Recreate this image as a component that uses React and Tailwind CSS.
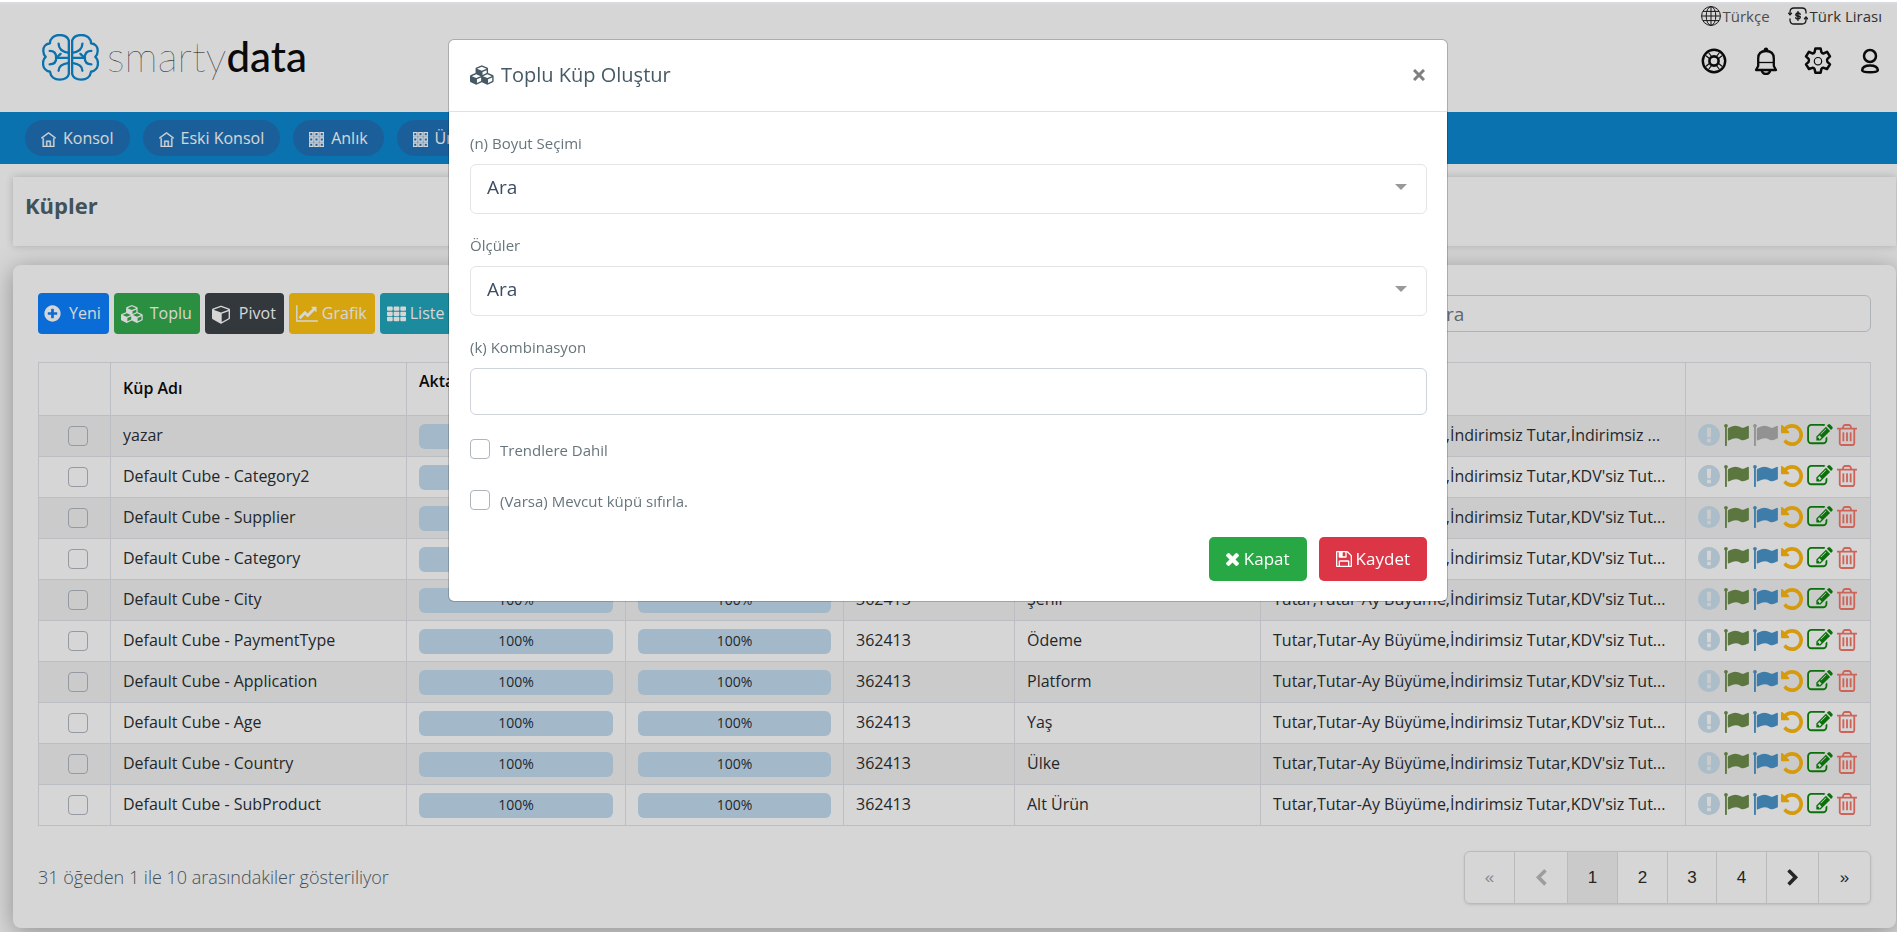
import React, { useState } from 'react';
import { TfiHome, TfiLayoutGrid3 } from 'react-icons/tfi';

const PATHS = {
  plus: ['0 0 1792 1792', 'M1344 960v-128q0-26-19-45t-45-19h-256v-256q0-26-19-45t-45-19h-128q-26 0-45 19t-19 45v256h-256q-26 0-45 19t-19 45v128q0 26 19 45t45 19h256v256q0 26 19 45t45 19h128q26 0 45-19t19-45v-256h256q26 0 45-19t19-45zm320-64q0 209-103 385.5t-279.5 279.5-385.5 103-385.5-103-279.5-279.5-103-385.5 103-385.5 279.5-279.5 385.5-103 385.5 103 279.5 279.5 103 385.5z'],
  cubes: ['0 0 2304 1792', 'M640 1632l384-192v-314l-384 164v342zm-64-454l404-173-404-173-404 173zm1088 454l384-192v-314l-384 164v342zm-64-454l404-173-404-173-404 173zm-448-293l384-165v-266l-384 164v267zm-64-379l441-189-441-189-441 189zm1088 518v416q0 36-19 67t-52 47l-448 224q-25 14-57 14t-57-14l-448-224q-4-2-7-4-2 2-7 4l-448 224q-25 14-57 14t-57-14l-448-224q-33-16-52-47t-19-67v-416q0-38 21.5-70t56.5-48l434-186v-400q0-38 21.5-70t56.5-48l448-192q23-10 50-10t50 10l448 192q35 16 56.5 48t21.5 70v400l434 186q36 16 57 48t21 70z'],
  cube: ['0 0 1664 1792', 'M896 1629l640-349v-636l-640 233v752zm-64-865l698-254-698-254-698 254zm832-252v768q0 35-18 65t-49 47l-704 384q-28 16-61 16t-61-16l-704-384q-31-17-49-47t-18-65v-768q0-40 23-73t61-47l704-256q22-8 44-8t44 8l704 256q38 14 61 47t23 73z'],
  chart: ['0 0 2048 1792', 'M2048 1536v128h-2048v-1536h128v1408h1920zm-128-1248v435q0 21-19.5 29.5t-35.5-7.5l-121-121-633 633q-10 10-23 10t-23-10l-233-233-416 416-192-192 585-585q10-10 23-10t23 10l233 233 464-464-121-121q-16-16-7.5-35.5t29.5-19.5h435q14 0 23 9t9 23z'],
  th: ['0 0 20 16', 'M1 0h4q1 0 1 1v2.500q0 1-1 1h-4q-1 0-1-1v-2.500q0-1 1-1zM8 0h4q1 0 1 1v2.500q0 1-1 1h-4q-1 0-1-1v-2.500q0-1 1-1zM15 0h4q1 0 1 1v2.500q0 1-1 1h-4q-1 0-1-1v-2.500q0-1 1-1zM1 5.500h4q1 0 1 1v2.500q0 1-1 1h-4q-1 0-1-1v-2.500q0-1 1-1zM8 5.500h4q1 0 1 1v2.500q0 1-1 1h-4q-1 0-1-1v-2.500q0-1 1-1zM15 5.500h4q1 0 1 1v2.500q0 1-1 1h-4q-1 0-1-1v-2.500q0-1 1-1zM1 11h4q1 0 1 1v2.500q0 1-1 1h-4q-1 0-1-1v-2.500q0-1 1-1zM8 11h4q1 0 1 1v2.500q0 1-1 1h-4q-1 0-1-1v-2.500q0-1 1-1zM15 11h4q1 0 1 1v2.500q0 1-1 1h-4q-1 0-1-1v-2.500q0-1 1-1z'],
  info: ['128 128 1536 1536', 'M896 128q209 0 385.5 103t279.5 279.5 103 385.5-103 385.5-279.5 279.5-385.5 103-385.5-103-279.5-279.5-103-385.5 103-385.5 279.5-279.5 385.5-103zm128 1247v-190q0-14-9-23.5t-22-9.5h-192q-13 0-23 10t-10 23v190q0 13 10 23t23 10h192q13 0 22-9.5t9-23.5zm-2-344l18-621q0-12-10-18-10-8-24-8h-220q-14 0-24 8-10 6-10 18l17 621q0 10 10 17.5t24 7.5h185q14 0 23.5-7.5t10.5-17.5z'],
  flag: ['64 128 1728 1536', 'M320 256q0 72-64 110v1266q0 13-9.5 22.5t-22.5 9.5h-64q-13 0-22.5-9.5t-9.5-22.5v-1266q-64-38-64-110 0-53 37.5-90.5t90.5-37.5 90.5 37.5 37.5 90.5zm1472 64v763q0 25-12.5 38.5t-39.5 27.5q-215 116-369 116-61 0-123.5-22t-108.500-48-115.500-48-142.500-22q-192 0-464 146-17 9-33 9-26 0-45-19t-19-45v-742q0-32 31-55 21-14 79-43 236-120 421-120 107 0 200 29t219 88q38 19 88 19 54 0 117.500-21t110-47 88-47 54.500-21q26 0 45 19t19 45z'],
  undo: ['128 128 1536 1536', 'M1664 896q0 156-61 298t-164 245-245 164-298 61q-172 0-327-72.5t-264-204.5q-7-10-6.5-22.5t8.500-20.5l137-138q10-9 25-9 16 2 23 12 73 95 179 147t225 52q104 0 198.5-40.5t163.5-109.5 109.5-163.5 40.5-198.5-40.5-198.5-109.5-163.5-163.5-109.5-198.5-40.5q-98 0-188 35.5t-160 101.5l137 138q31 30 14 69-17 40-59 40h-448q-26 0-45-19t-19-45v-448q0-42 40-59 39-17 69 14l130 129q107-101 244.5-156.5t284.5-55.5q156 0 298 61t245 164 164 245 61 298z'],
  edit: ['0 128 1792 1536', 'M888 1184l116-116-152-152-116 116v56h96v96h56zm440-720q-16-16-33 1l-350 350q-17 17-1 33t33-1l350-350q17-17 1-33zm80 594v190q0 119-84.5 203.5t-203.5 84.5h-832q-119 0-203.5-84.5t-84.5-203.5v-832q0-119 84.5-203.5t203.5-84.5h832q63 0 117 25 15 7 18 23 3 17-9 29l-49 49q-14 14-32 8-23-6-45-6h-832q-66 0-113 47t-47 113v832q0 66 47 113t113 47h832q66 0 113-47t47-113v-126q0-13 9-22l64-64q15-15 35-7t20 29zm-96-738l288 288-672 672h-288v-288zm444 132l-92 92-288-288 92-92q28-28 68-28t68 28l152 152q28 28 28 68t-28 68z'],
  trash: ['192 128 1408 1536', 'M704 736v576q0 14-9 23t-23 9h-64q-14 0-23-9t-9-23v-576q0-14 9-23t23-9h64q14 0 23 9t9 23zm256 0v576q0 14-9 23t-23 9h-64q-14 0-23-9t-9-23v-576q0-14 9-23t23-9h64q14 0 23 9t9 23zm256 0v576q0 14-9 23t-23 9h-64q-14 0-23-9t-9-23v-576q0-14 9-23t23-9h64q14 0 23 9t9 23zm128 724v-948h-896v948q0 22 7 40.5t14.5 27 10.5 8.5h832q3 0 10.5-8.5t14.5-27 7-40.5zm-672-1076h448l-48-117q-7-9-17-11h-317q-10 2-17 11zm928 32v64q0 14-9 23t-23 9h-96v948q0 83-47 143.5t-113 60.5h-832q-66 0-113-58.5t-47-141.5v-952h-96q-14 0-23-9t-9-23v-64q0-14 9-23t23-9h309l70-167q15-37 54-63t79-26h320q40 0 79 26t54 63l70 167h309q14 0 23 9t9 23z'],
  save: ['128 128 1536 1536', 'M512 1536h768v-384h-768v384zm896 0h128v-896q0-14-10-38.5t-20-34.5l-281-281q-10-10-34-20t-39-10v416q0 40-28 68t-68 28h-576q-40 0-68-28t-28-68v-416h-128v1280h128v-416q0-40 28-68t68-28h832q40 0 68 28t28 68v416zm-384-928v-320q0-13-9.5-22.5t-22.5-9.5h-192q-13 0-22.5 9.5t-9.5 22.5v320q0 13 9.5 22.5t22.5 9.5h192q13 0 22.5-9.5t9.5-22.5zm640 32v928q0 40-28 68t-68 28h-1344q-40 0-68-28t-28-68v-1344q0-40 28-68t68-28h928q40 0 88 20t76 48l280 280q28 28 48 76t20 88z'],
  times: ['302 366 1188 1188', 'M1490 1322q0 40-28 68l-136 136q-28 28-68 28t-68-28l-294-294-294 294q-28 28-68 28t-68-28l-136-136q-28-28-28-68t28-68l294-294-294-294q-28-28-28-68t28-68l136-136q28-28 68-28t68 28l294 294 294-294q28-28 68-28t68 28l136 136q28 28 28 68t-28 68l-294 294 294 294q28 28 28 68z'],
  right: ['0 0 1792 1792', 'M1363 877l-742 742q-19 19-45 19t-45-19l-166-166q-19-19-19-45t19-45l531-531-531-531q-19-19-19-45t19-45l166-166q19-19 45-19t45 19l742 742q19 19 19 45t-19 45z'],
  left: ['0 0 1792 1792', 'M1427 301l-531 531 531 531q19 19 19 45t-19 45l-166 166q-19 19-45 19t-45-19l-742-742q-19-19-19-45t19-45l742-742q19-19 45-19t45 19l166 166q19 19 19 45t-19 45z'],
};

const Icon = ({ name, className }) => (
  <svg viewBox={PATHS[name][0]} className={className} fill="currentColor" aria-hidden="true">
    <path d={PATHS[name][1]} />
  </svg>
);

const BrainHalf = () => (
  <>
    <path d="M81 20C78 8 66 3 52 3C36 3 24 14 24 28C10 30 3 40 4 52C4 60 7 65 11 69C5 74 3 80 3 88C3 102 12 112 24 114C26 129 38 138 53 138C67 138 78 133 81 121Z" />
    <path d="M81 57C66 55 50 48 50 29" />
    <path d="M81 72H42" />
    <path d="M23 51C36 51 43 57 43 72C43 85 36 92 23 92" />
    <path d="M43 72L56 60" />
    <path d="M81 87C66 89 50 96 50 111" />
  </>
);

const Logo = () => (
  <a href="#" className="flex items-center gap-2 text-black">
    <svg viewBox="0 0 172 142" className="h-[47px] w-[57px]" fill="none" stroke="#0082cd" strokeWidth="7" strokeLinecap="round" strokeLinejoin="round">
      <BrainHalf />
      <g transform="matrix(-1 0 0 1 172 0)">
        <BrainHalf />
      </g>
    </svg>
    <span className="pb-0.5 font-['Lato',sans-serif] text-[42px] leading-[46px]">
      <span className="font-thin">smarty</span>
      <span className="font-medium">data</span>
    </span>
  </a>
);

const GlobeIcon = () => (
  <svg viewBox="0 0 20 20" className="size-5" fill="none" stroke="#111" strokeWidth="1">
    <circle cx="10" cy="10" r="9.400" />
    <ellipse cx="10" cy="10" rx="4.800" ry="9.400" />
    <path d="M10 .6v18.800M.6 10h18.800M2 5.400h16M2 14.600h16" />
  </svg>
);

const CurrencyIcon = () => (
  <svg viewBox="0 0 20 20" className="size-5" fill="none" stroke="#111" strokeWidth="1.300" strokeLinecap="round" strokeLinejoin="round">
    <path d="M2 8.500V6Q2 2 6 2h8q4 0 4 4v1M18 11.500V14q0 4-4 4H6q-4 0-4-4v-1" />
    <path d="M.6 7.200L2 8.900l1.500-1.700M16.500 12.700L18 11l1.500 1.700" />
    <path d="M12.200 8.200Q11.800 7 10 7T7.900 8.500 10 10t2.200 1.500T10 13t-2.200-1.200M10 5.800v8.400" strokeWidth="1.500" />
  </svg>
);

const HelpIcon = () => (
  <svg viewBox="0 0 26 26" className="size-[26px] shrink-0" fill="none" stroke="currentColor">
    <circle cx="13" cy="13" r="11.200" strokeWidth="2.400" />
    <circle cx="13" cy="13" r="4.600" strokeWidth="2.600" />
    <path strokeWidth="1.200" d="M9 11L5 7.800M11 9L7.800 5M15 9l3.200-4M17 11l4-3.200M17 15l4 3.200M15 17l3.200 4M11 17l-3.200 4M9 15l-4 3.200" />
  </svg>
);

const BellIcon = () => (
  <svg viewBox="0 0 24 28" className="h-7 w-6 shrink-0" fill="none" stroke="currentColor" strokeWidth="2.300" strokeLinejoin="round">
    <path d="M2 23l2.200-4V11.500Q4.200 4 12 4t7.800 7.500V19L22 23z" />
    <path d="M4.200 15.500h15.600" strokeWidth="1.300" />
    <path d="M9.500 3.500Q9.700.6 12 .6t2.500 2.900z" fill="currentColor" stroke="none" />
    <path d="M7.800 23.500Q8.500 27 12 27t4.200-3.500" />
  </svg>
);

const GearIcon = () => (
  <svg viewBox="0 0 28 28" className="size-7 shrink-0" fill="none" stroke="currentColor" strokeLinejoin="round">
    <path
      strokeWidth="2.500"
      d="M11.400 1.500h5.200l.8 3.600q.8 1.500 2.300 1.300l3.300-1.600 3 4.600-2.600 2.500q-1 1.400 0 3l2.600 2.400-3 4.700-3.300-1.200q-1.600-.3-2.300 1.200l-.8 3.800h-5.200l-.8-3.800q-.8-1.500-2.300-1.200L5 22l-3-4.700 2.600-2.400q1-1.600 0-3L2 9.400l3-4.600 3.300 1.600q1.600.2 2.300-1.300z"
    />
    <circle cx="14" cy="14.200" r="3.700" strokeWidth="1.200" />
  </svg>
);

const UserIcon = () => (
  <svg viewBox="0 0 20 28" className="h-7 w-5 shrink-0" fill="none" stroke="currentColor" strokeWidth="2.500">
    <circle cx="10" cy="9" r="6" />
    <path d="M2.200 23.200Q2.500 18.400 10 18.400t7.800 4.800Q17.500 25.200 10 25.200T2.200 23.200z" />
  </svg>
);

const navItems = [
  { label: 'Konsol', icon: TfiHome },
  { label: 'Eski Konsol', icon: TfiHome },
  { label: 'Anlık', icon: TfiLayoutGrid3 },
  { label: 'Ürün', icon: TfiLayoutGrid3 },
];

const tools = [
  { label: 'Yeni', icon: 'plus', box: 'size-[19px]', style: 'bg-[#007bff] gap-[7px] pl-[5px]' },
  { label: 'Toplu', icon: 'cubes', box: 'h-[18px] w-[23px]', style: 'bg-[#28a745] gap-1.5 pl-[7px]' },
  { label: 'Pivot', icon: 'cube', box: 'h-5 w-[18px]', style: 'bg-[#343a40] gap-[9px] pl-[7px]' },
  { label: 'Grafik', icon: 'chart', box: 'h-[19px] w-[22px]', style: 'bg-[#ffc107] gap-1 pl-[7px]' },
  { label: 'Liste', icon: 'th', box: 'h-4 w-[19px]', style: 'bg-[#17a2b8] gap-1 pl-[7px]' },
];

const measures = "Tutar,Tutar-Ay Büyüme,İndirimsiz Tutar,KDV'siz Tut...";

const rows = [
  { name: 'yazar', dimension: 'Yazar', measures: 'Tutar,Tutar-Ay Büyüme,İndirimsiz Tutar,İndirimsiz ...', off: true },
  { name: 'Default Cube - Category2', dimension: 'Kategori 2', measures },
  { name: 'Default Cube - Supplier', dimension: 'Tedarikçi', measures },
  { name: 'Default Cube - Category', dimension: 'Kategori', measures },
  { name: 'Default Cube - City', dimension: 'Şehir', measures },
  { name: 'Default Cube - PaymentType', dimension: 'Ödeme', measures },
  { name: 'Default Cube - Application', dimension: 'Platform', measures },
  { name: 'Default Cube - Age', dimension: 'Yaş', measures },
  { name: 'Default Cube - Country', dimension: 'Ülke', measures },
  { name: 'Default Cube - SubProduct', dimension: 'Alt Ürün', measures },
];

const checkboxClass = 'size-5 shrink-0 appearance-none rounded border border-[#adb5bd] bg-transparent checked:bg-[#007bff]';

const Progress = () => (
  <div className="h-[25px] rounded-md bg-[#c0dbf1] text-center text-sm leading-[23px] text-[#212529]">100%</div>
);

const RowActions = ({ off }) => (
  <div className="flex items-center justify-between pl-3 pr-[13px]">
    <button aria-label="Bilgi" className="text-[#cbe0f0]"><Icon name="info" className="size-[22px]" /></button>
    <button aria-label="Aktif" className="text-[#668843]"><Icon name="flag" className="h-[22px] w-[25px]" /></button>
    <button aria-label="Trend" className={off ? 'text-[#aaaaaa]' : 'text-[#428fc7]'}><Icon name="flag" className="h-[22px] w-[25px]" /></button>
    <button aria-label="Sıfırla" className="text-[#ffb404]"><Icon name="undo" className="size-[22px]" /></button>
    <button aria-label="Düzenle" className="text-[#008000]"><Icon name="edit" className="h-[22px] w-[26px]" /></button>
    <button aria-label="Sil" className="text-[#f77062]"><Icon name="trash" className="h-[22px] w-5" /></button>
  </div>
);

const CubeTable = () => (
  <table className="mt-7 w-full table-fixed border-collapse text-base text-[#212529] [&_td]:border [&_td]:border-[#dee2e6] [&_th]:border [&_th]:border-[#dee2e6]">
    <colgroup>
      <col className="w-[72px]" />
      <col className="w-[296px]" />
      <col className="w-[219px]" />
      <col className="w-[218px]" />
      <col className="w-[171px]" />
      <col className="w-[246px]" />
      <col />
      <col className="w-[185px]" />
    </colgroup>
    <thead>
      <tr className="h-[53px] text-left text-black [&>th]:px-3 [&>th]:pb-0.5 [&>th]:font-semibold">
        <th></th>
        <th>Küp Adı</th>
        <th className="pt-1 align-top leading-7">Aktarım</th>
        <th>Hesaplama</th>
        <th>Kayıt</th>
        <th>Boyut</th>
        <th>Ölçüler</th>
        <th></th>
      </tr>
    </thead>
    <tbody>
      {rows.map((row) => (
        <tr key={row.name} className="h-[41px] odd:bg-[#f2f2f2] [&>td]:px-3">
          <td className="!pl-[18px]">
            <input type="checkbox" aria-label={row.name} className={`${checkboxClass} mx-auto block`} />
          </td>
          <td className="pb-0.5">{row.name}</td>
          <td><Progress /></td>
          <td><Progress /></td>
          <td className="pb-0.5">362413</td>
          <td className="pb-0.5">{row.dimension}</td>
          <td className="whitespace-nowrap pb-0.5">{row.measures}</td>
          <td className="!px-0 pb-0.5"><RowActions off={row.off} /></td>
        </tr>
      ))}
    </tbody>
  </table>
);

const Pagination = () => (
  <nav aria-label="Sayfalar" className="flex h-[53px] rounded-md border border-[#dcdcdc] font-['Liberation_Sans',sans-serif] text-[17px] text-[#222] shadow-sm [&>button]:flex [&>button]:items-center [&>button]:justify-center [&>button]:border-r [&>button]:border-[#dcdcdc]">
    <button disabled className="w-[50px] text-[#a0a0a0]">«</button>
    <button disabled aria-label="Önceki" className="w-[53px] text-[#b8b8b8]"><Icon name="left" className="size-[18px]" /></button>
    <button className="w-[50px] bg-[#f0f0f0]">1</button>
    <button className="w-[50px]">2</button>
    <button className="w-[49px]">3</button>
    <button className="w-[50px]">4</button>
    <button aria-label="Sonraki" className="w-[52px]"><Icon name="right" className="size-[18px]" /></button>
    <button className="w-[51px] !border-r-0">»</button>
  </nav>
);

const SelectField = ({ id, label }) => (
  <div className="mb-5">
    <label htmlFor={id} className="mb-2.5 block text-[15px] leading-[22px]">{label}</label>
    <div className="relative">
      <select id={id} className="block h-[50px] w-full appearance-none rounded-md border border-[#e5e5e5] bg-white px-4 pb-1 text-[19px] text-[#3d4d63]">
        <option>Ara</option>
      </select>
      <svg viewBox="0 0 12 6" className="pointer-events-none absolute right-5 top-5 h-1.5 w-3" fill="#999">
        <path d="M0 0h12L6 6z" />
      </svg>
    </div>
  </div>
);

const CheckField = ({ id, label, className }) => (
  <div className={`flex items-center gap-2.5 ${className}`}>
    <input id={id} type="checkbox" className={checkboxClass} />
    <label htmlFor={id} className="pt-0.5 text-[15px] leading-6">{label}</label>
  </div>
);

const BulkCubeModal = ({ onClose }) => (
  <div className="fixed inset-x-0 bottom-0 top-1 z-50 bg-[#323232]/20 pr-px pt-[35px]">
    <div role="dialog" aria-labelledby="modal-title" className="mx-auto w-full max-w-[1000px] rounded-md border border-black/20 bg-white bg-clip-padding">
      <div className="flex h-[72px] items-center justify-between border-b border-[#dee2e6] pb-0.5 pl-[21px] pr-5 text-[#455a64]">
        <h2 id="modal-title" className="flex items-center gap-1.5 text-xl">
          <Icon name="cubes" className="h-5 w-[25px]" />
          Toplu Küp Oluştur
        </h2>
        <button onClick={onClose} aria-label="Kapat" className="px-0.5 text-[#7f7f7f]">
          <svg viewBox="0 0 12 12" className="size-3" stroke="currentColor" strokeWidth="3">
            <path d="M1 1l10 10M11 1L1 11" />
          </svg>
        </button>
      </div>
      <form className="py-5 pl-[21px] pr-5" onSubmit={(e) => e.preventDefault()}>
        <SelectField id="dimensions" label="(n) Boyut Seçimi" />
        <SelectField id="measures" label="Ölçüler" />
        <label htmlFor="combination" className="mb-2.5 block text-[15px] leading-[22px]">(k) Kombinasyon</label>
        <input id="combination" type="text" className="block h-[47px] w-full rounded-md border border-[#ced4da] px-3 text-[19px]" />
        <CheckField id="trends" label="Trendlere Dahil" className="mt-[21px]" />
        <CheckField id="reset" label="(Varsa) Mevcut küpü sıfırla." className="mt-[25px]" />
        <div className="mt-6 flex justify-end gap-3 text-[17px] font-medium text-white">
          <button type="button" onClick={onClose} className="flex h-11 items-center gap-[5px] rounded-[5px] bg-[#28a745] px-[17px]">
            <Icon name="times" className="size-[13px]" />
            Kapat
          </button>
          <button type="submit" className="flex h-11 items-center gap-1 rounded-[5px] bg-[#dc3545] px-[17px]">
            <Icon name="save" className="size-4" />
            Kaydet
          </button>
        </div>
      </form>
    </div>
  </div>
);

export default function App() {
  const [showModal, setShowModal] = useState(true);

  return (
    <div className="min-h-screen overflow-hidden bg-white font-['Open_Sans',sans-serif] text-[#67757c]">
      <div className="mt-0.5 h-0.5 bg-[#d8dae2]" />
      <header className="flex h-[108px] justify-between pl-[42px] pr-[15px]">
        <div className="pt-[29px]">
          <Logo />
        </div>
        <div>
          <div className="flex justify-end gap-[18px] text-[15px] leading-6">
            <a href="#" className="flex items-center gap-0.5 text-[#555]"><GlobeIcon />Türkçe</a>
            <a href="#" className="flex items-center gap-0.5 text-[#333]"><CurrencyIcon />Türk Lirası</a>
          </div>
          <div className="mt-[19px] flex items-center justify-end gap-7 text-black [&>button]:flex [&>button]:w-6 [&>button]:justify-center">
            <button aria-label="Yardım"><HelpIcon /></button>
            <button aria-label="Bildirimler"><BellIcon /></button>
            <button aria-label="Ayarlar"><GearIcon /></button>
            <button aria-label="Profil"><UserIcon /></button>
          </div>
        </div>
      </header>

      <nav className="flex h-[52px] items-center gap-[13px] bg-[#0082cd] px-[25px]">
        {navItems.map(({ label, icon: NavIcon }) => (
          <a key={label} href="#" className="flex h-9 items-center gap-[7px] rounded-full bg-[#166bb5] px-4 text-base text-white">
            <NavIcon className="mt-0.5 size-[15px] [stroke-width:0.6]" />
            {label}
          </a>
        ))}
      </nav>

      <div className="pb-1 pl-[13px] pr-px">
        <div className="mt-[13px] bg-white px-3 pb-[27px] pt-3.5 shadow-[0_0_8px_rgba(0,0,0,0.2)]">
          <h1 className="text-[22px] font-bold leading-7 text-[#455a64]">Küpler</h1>
        </div>

        <main className="mt-[19px] rounded-lg bg-white px-[25px] pb-6 pt-7 shadow-[0_4px_24px_rgba(0,0,0,0.35)]">
          <div className="flex items-center justify-between">
            <div className="flex gap-[5px]">
              {tools.map((tool) => (
                <button key={tool.label} onClick={() => setShowModal(true)} className={`flex h-[41px] items-center rounded pr-2 text-base font-medium text-white ${tool.style}`}>
                  <Icon name={tool.icon} className={tool.box} />
                  <span className="pb-0.5">{tool.label}</span>
                </button>
              ))}
            </div>
            <input type="search" aria-label="Ara" placeholder="Ara" className="h-[37px] w-[450px] rounded-md border border-[#ced4da] bg-transparent px-3 text-[19px] placeholder:text-[#6c757d]" />
          </div>

          <CubeTable />

          <div className="mt-[25px] flex items-center justify-between">
            <p className="pb-0.5 text-lg font-light text-[#4a585f]">31 öğeden 1 ile 10 arasındakiler gösteriliyor</p>
            <Pagination />
          </div>
        </main>
      </div>

      {showModal && <BulkCubeModal onClose={() => setShowModal(false)} />}
    </div>
  );
}
